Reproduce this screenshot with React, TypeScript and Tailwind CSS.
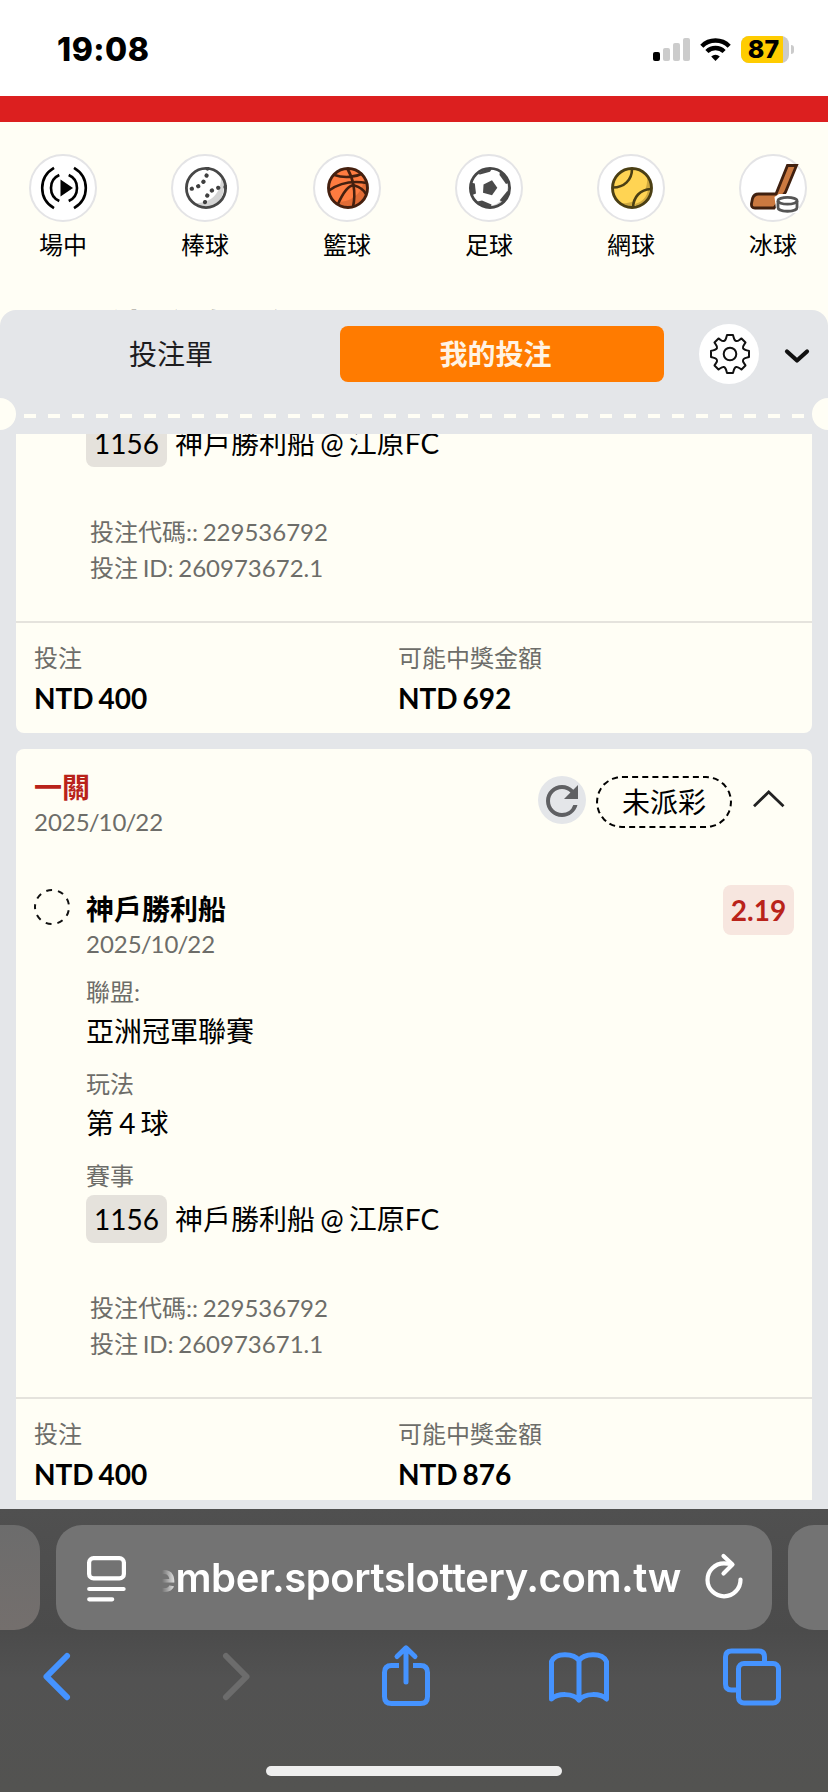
import type { ReactNode } from 'react'

const bets = [
  {
    id: '260973672.1',
    code: '229536792',
    matchNo: '1156',
    match: '神戶勝利船 @ 江原FC',
    stake: 'NTD 400',
    payout: 'NTD 692',
  },
  {
    id: '260973671.1',
    code: '229536792',
    matchNo: '1156',
    match: '神戶勝利船 @ 江原FC',
    stake: 'NTD 400',
    payout: 'NTD 876',
  },
]

type Bet = (typeof bets)[number]

function LiveIcon() {
  return (
    <svg width="48" height="48" viewBox="0 0 48 48" fill="none" stroke="#000" strokeWidth="2.6" className="relative left-px">
      <path d="M14 3.8C6 8.500 2.200 15.500 2.200 24S6 39.500 14 44.200" />
      <path d="M34 3.800C42 8.500 45.800 15.500 45.800 24S42 39.500 34 44.200" />
      <path d="M19.300 11C13.500 13.500 11 18 11 24S13.500 34.500 19.300 37" />
      <path d="M28.700 11C34.500 13.500 37 18 37 24S34.500 34.500 28.700 37" />
      <path d="M20.500 15.500v17L33 24z" fill="#000" stroke="none" />
    </svg>
  )
}

function BaseballIcon() {
  return (
    <svg width="42" height="42" viewBox="0 0 42 42" fill="none" className="relative left-px">
      <circle cx="21" cy="21" r="19.500" fill="#fff" />
      <path d="M36 8c1 18-10 29-27 28 8 6 18 5 24-1s8-17 3-27z" fill="#d4d4d4" />
      <path d="M22.500 1.500c0 12-7 20-21 21M40.500 20C26 20 19.500 28 19.500 40.500" stroke="#3f3f3f" strokeWidth="4.200" strokeLinecap="round" strokeDasharray="0.1 6.9" />
      <circle cx="21" cy="21" r="19.600" stroke="#474747" strokeWidth="2.800" />
    </svg>
  )
}

function BasketballIcon() {
  return (
    <svg width="42" height="42" viewBox="0 0 42 42" fill="none" className="relative left-px">
      <circle cx="21" cy="21" r="19.500" fill="#ff7c40" />
      <path d="M37 9c0 17-12 27-29 26 8 7 19 6 26-1s8-17 3-25z" fill="#e06c36" />
      <g stroke="#45200f" strokeWidth="2.600">
        <path d="M20.500 2c5 8 9 22 5.500 38" />
        <path d="M7.500 8C17 11.500 29 10 35.500 6.500" />
        <path d="M2 23.500C13 15.500 26 13.500 40 16" />
        <path d="M11 37C16 26 22 17.500 27.500 18.500C33 20 37 23.500 39 27" />
        <circle cx="21" cy="21" r="19.500" strokeWidth="2.900" />
      </g>
    </svg>
  )
}

function SoccerIcon() {
  return (
    <svg width="42" height="42" viewBox="0 0 42 42" fill="none" className="relative left-px">
      <circle cx="21" cy="21" r="19.500" fill="#fff" />
      <path d="M39 12c1 16-7 25-18 27 8 2 19-3 19-18z" fill="#d2d2d2" />
      <path d="M23 5q4 3 9 1l6 12-1 7-4 8-10 5-9-4-7-8-1-9 5-9z" fill="#fff" />
      <g fill="#4a4a4a">
        <path d="M14.500 17.500 23 13.300 28.300 20.800 23 28.300 14 25.800z" />
        <path d="M9 7Q15 1.500 23 1.800L21 4.800 11 7.500z" />
        <path d="M31 4q6 4 8.500 12l-2.500 1-6.500-9z" />
        <path d="M40 23q-.5 7-5.500 12.500l-3.800-2.200L37.500 25z" />
        <path d="M8.500 34.500 13 33.500l9.500 4-.5 2.500q-8 0-13.500-5.500z" />
        <path d="M2 15.500 5.800 16.500 7 26.500 3.500 28q-3-6-1.500-12.500z" />
      </g>
      <circle cx="21" cy="21" r="19.600" stroke="#474747" strokeWidth="2.800" />
    </svg>
  )
}

function TennisIcon() {
  return (
    <svg width="42" height="42" viewBox="0 0 42 42" fill="none" className="relative left-px">
      <circle cx="21" cy="21" r="19.500" fill="#ffd453" />
      <path d="M36 8c2 17-9 30-28 28 9 7 20 5 26-1s8-18 2-27z" fill="#cfa93f" />
      <path d="M22 40C22 29 29 23 40 21.500c0 10-8 18-18 18.500z" fill="#ffd453" />
      <path d="M37 22c-.5 8-6 13-13 15 0 3 7 3 11-2s5-9 2-13z" fill="#cfa93f" />
      <g stroke="#4b3f14" strokeWidth="2.600">
        <path d="M21 2C21 13 13 20.500 2 20.500" />
        <path d="M22 40.500C22.500 30 29 22.500 40 22" />
        <circle cx="21" cy="21" r="19.500" strokeWidth="2.900" />
      </g>
    </svg>
  )
}

function HockeyIcon() {
  return (
    <svg width="50" height="50" viewBox="0 0 50 50" fill="none" className="relative left-px">
      <path d="M38.500 2.500h9L36.500 29 25 45H6q-4 0-3.500-4.500l1-5Q5 31 9.500 31h17.500z" fill="#cb7940" stroke="#40200f" strokeWidth="2.800" />
      <path d="M25.500 34 30 31h20v19H27.500z" fill="#fff" />
      <ellipse cx="38.500" cy="37.800" rx="9.500" ry="3.400" fill="#fff" stroke="#555" strokeWidth="2.800" />
      <path d="M29 38v6.500c0 5 19 5 19 0V38" stroke="#555" strokeWidth="2.800" />
    </svg>
  )
}

const sports: { name: string; icon: ReactNode }[] = [
  { name: '場中', icon: <LiveIcon /> },
  { name: '棒球', icon: <BaseballIcon /> },
  { name: '籃球', icon: <BasketballIcon /> },
  { name: '足球', icon: <SoccerIcon /> },
  { name: '網球', icon: <TennisIcon /> },
  { name: '冰球', icon: <HockeyIcon /> },
]

function StatusBar() {
  return (
    <div className="flex h-24 shrink-0 items-start justify-between bg-white pl-[57px] pr-[34px] pt-[36px] font-['Inter','Liberation_Sans',sans-serif]">
      <span className="text-[32px] font-extrabold leading-[27px] tracking-[0.5px] text-black">19:08</span>
      <div className="flex items-center">
        <svg width="37" height="27" viewBox="0 0 37 27" className="mr-[10px]">
          <rect x="0" y="16" width="7" height="9" rx="2" fill="#000" />
          <rect x="10" y="12" width="7" height="13" rx="2" fill="#ccc" />
          <rect x="20" y="7" width="7" height="18" rx="2" fill="#ccc" />
          <rect x="30" y="2" width="7" height="23" rx="2" fill="#ccc" />
        </svg>
        <svg width="31" height="27" viewBox="0 0 31 27" className="mr-[10px]" fill="none" stroke="#000" strokeWidth="4.400">
          <path d="M1.800 10.200a19.300 19.300 0 0 1 27.400 0" />
          <path d="M6.900 15.500a12.200 12.200 0 0 1 17.200 0" />
          <path d="M15.500 25l4.300-4.400a6 6 0 0 0-8.600 0z" fill="#000" stroke="none" />
        </svg>
        <div className="flex h-[27px] w-12 overflow-hidden rounded-[8px] bg-[#cbcbcb]">
          <span className="w-[42px] bg-[#ffcc00] pl-[3px] text-center text-[25px] font-extrabold leading-[27px] text-black">87</span>
        </div>
        <div className="ml-[2px] h-[9px] w-[3px] rounded-r-full bg-[#cbcbcb]" />
      </div>
    </div>
  )
}

function SportsNav() {
  return (
    <div className="flex h-[186px] shrink-0 overflow-hidden pt-8">
      <div className="-ml-2 flex">
        {sports.map((sport) => (
          <div key={sport.name} className="flex w-[142px] shrink-0 flex-col items-center">
            <div className="flex size-[68px] items-center justify-center rounded-full border-2 border-[#e4e4e6] bg-white">
              {sport.icon}
            </div>
            <span className="mt-[5px] text-[24px] leading-9 text-black">{sport.name}</span>
          </div>
        ))}
      </div>
    </div>
  )
}

function SlipHeader() {
  return (
    <div className="flex h-[124px] shrink-0 flex-col rounded-t-[16px] bg-[#e4e6e9]">
      <div className="flex items-center pt-[14px]">
        <button className="h-14 w-[340px] pl-[2px] text-[28px] text-[#1c1c1e]">投注單</button>
        <button className="h-14 w-[324px] rounded-lg bg-[#ff7b00] pr-[13px] text-[28px] font-bold text-[#fff3e4]">
          我的投注
        </button>
        <button className="ml-[35px] flex size-[60px] items-center justify-center rounded-full bg-white pl-[1px]">
          <svg width="42" height="42" viewBox="-21 -21 42 42" fill="none" stroke="#111" strokeWidth="2" strokeLinejoin="round">
            <circle r="6.300" />
            <path d="M-3-19H3C4-16 4-13.500 6-13C8-12.300 9.500-14.500 11.500-15.500L15.500-11.500C14.500-9.500 12.300-8 13-6C13.500-4 16-4 19-3V3C16 4 13.500 4 13 6C12.300 8 14.500 9.500 15.500 11.500L11.500 15.500C9.500 14.500 8 12.300 6 13C4 13.500 4 16 3 19H-3C-4 16-4 13.500-6 13C-8 12.300-9.500 14.500-11.500 15.500L-15.500 11.500C-14.500 9.500-12.300 8-13 6C-13.500 4-16 4-19 3V-3C-16-4-13.500-4-13-6C-12.300-8-14.500-9.500-15.500-11.500L-11.500-15.500C-9.500-14.500-8-12.300-6-13C-4-13.500-4-16-3-19Z" />
          </svg>
        </button>
        <svg width="26" height="16" viewBox="0 0 26 16" className="ml-[25px] mt-[3px]" fill="none" stroke="#111" strokeWidth="4.200" strokeLinejoin="round" strokeLinecap="round">
          <path d="M3 3.500 13 12.500 23 3.500" />
        </svg>
      </div>
      {/* ticket perforation */}
      <div className="mt-[14px] flex h-8 items-center justify-between">
        <div className="h-8 w-4 rounded-r-full bg-[#fffef5]" />
        <div className="mt-1 h-1 w-[780px] bg-[repeating-linear-gradient(90deg,#fffef5_0_12px,transparent_12px_24px)]" />
        <div className="h-8 w-4 rounded-l-full bg-[#fffef5]" />
      </div>
    </div>
  )
}

function BetDate({ date }: { date: string }) {
  const [year, month, day] = date.split('/')
  return (
    <span className="mb-[2px] text-[24px] leading-[30px] text-[#6d6d69]">
      {year}
      <span className="-mx-px">/</span>
      {month}
      <span className="-mx-px">/</span>
      {day}
    </span>
  )
}

function BetHeader() {
  return (
    <div className="flex h-[117px] items-start justify-between pl-[18px] pr-[26px] pt-[18px]">
      <div className="flex flex-col">
        <span className="text-[28px] font-bold leading-10 text-[#b9231a]">一關</span>
        <BetDate date="2025/10/22" />
      </div>
      <div className="flex pt-[9px]">
        <button className="flex size-12 items-center justify-center rounded-full bg-[#e4e6e9]">
          <svg width="48" height="48" viewBox="0 0 24 24" fill="#5f6063" className="relative top-px">
            <path d="M17.650 6.350A7.958 7.958 0 0 0 12 4c-4.420 0-7.990 3.580-7.990 8s3.570 8 7.990 8c3.730 0 6.840-2.550 7.730-6h-2.080A5.990 5.990 0 0 1 12 18c-3.310 0-6-2.690-6-6s2.690-6 6-6c1.660 0 3.140.690 4.220 1.780L13 11h7V4z" />
          </svg>
        </button>
        <div className="ml-[10px] flex h-[52px] w-[136px] items-center justify-center rounded-full border-2 border-dashed border-black text-[28px] text-black">
          未派彩
        </div>
        <svg width="34" height="20" viewBox="0 0 34 20" className="ml-5 mt-[12px]" fill="none" stroke="#222" strokeWidth="2.800">
          <path d="M2 18.300 16.700 4 31.500 18.300" />
        </svg>
      </div>
    </div>
  )
}

function Selection() {
  return (
    <div className="flex items-start pl-[18px] pr-[18px]">
      <div className="mt-[23px] flex size-9 items-center">
        <svg width="36" height="36" viewBox="0 0 36 36" fill="none" stroke="#111" strokeWidth="2">
          <circle cx="18" cy="18" r="17" strokeDasharray="5.87 6" strokeDashoffset="3" transform="rotate(180 18 18)" />
        </svg>
      </div>
      <div className="ml-4 flex flex-1 flex-col pt-[23px]">
        <span className="text-[28px] font-bold leading-10 text-black">神戶勝利船</span>
        <BetDate date="2025/10/22" />
        <span className="mb-[2px] mt-[14px] text-[24px] leading-[34px] text-[#6d6d69]">聯盟:</span>
        <span className="text-[28px] leading-10 text-black">亞洲冠軍聯賽</span>
        <span className="mb-[2px] mt-4 text-[24px] leading-[34px] text-[#6d6d69]">玩法</span>
        <span className="text-[28px] leading-10 text-black [word-spacing:-2px]">第 4 球</span>
        <span className="mb-[2px] mt-4 text-[24px] leading-[34px] text-[#6d6d69]">賽事</span>
      </div>
      <span className="mt-[19px] h-[50px] w-[71px] rounded-lg bg-[#f7e6df] text-center text-[28px] font-bold leading-[50px] text-[#b9231a]">
        2.19
      </span>
    </div>
  )
}

function BetFooter({ bet }: { bet: Bet }) {
  return (
    <div>
      <div className="flex items-center pl-[70px]">
        <span className="flex h-12 w-[81px] items-center justify-center rounded-lg bg-[#e5e2dc] text-[28px] text-black">
          {bet.matchNo}
        </span>
        <span className="ml-[8px] text-[28px] text-black [word-spacing:-2px]">{bet.match}</span>
      </div>
      <div className="mt-[47px] flex flex-col pl-[74px] text-[24px] leading-9 text-[#6d6d69] [word-spacing:-1.5px]">
        <span>投注代碼:: {bet.code}</span>
        <span>投注 ID: {bet.id}</span>
      </div>
      <div className="mt-[35px] flex h-[112px] border-t-2 border-[#e5e3dd] pl-[18px] pt-[17px] [word-spacing:-2px]">
        <div className="flex w-[364px] flex-col">
          <span className="text-[24px] leading-9 text-[#6d6d69]">投注</span>
          <span className="mt-[2px] text-[28px] font-bold leading-10 text-black">{bet.stake}</span>
        </div>
        <div className="flex flex-col">
          <span className="text-[24px] leading-9 text-[#6d6d69]">可能中獎金額</span>
          <span className="mt-[2px] text-[28px] font-bold leading-10 text-black">{bet.payout}</span>
        </div>
      </div>
    </div>
  )
}

function BrowserBar() {
  return (
    <div className="flex h-[283px] shrink-0 flex-col bg-[linear-gradient(180deg,#505050_0%,#4b4b4b_43%,#525252_60%,#535351_100%)] font-['Inter','Liberation_Sans',sans-serif]">
      <div className="flex justify-between pt-4">
        <div className="h-[105px] w-10 rounded-r-[26px] bg-[linear-gradient(180deg,#6c6c6c,#746f6d)]" />
        <div className="flex h-[105px] w-[716px] items-center rounded-[26px] bg-[#737373] pl-[31px]">
          <svg width="39" height="46" viewBox="0 0 39 46" className="mt-[3px]" fill="none" stroke="#fff" strokeWidth="4.200" strokeLinecap="round">
            <rect x="2.100" y="2.100" width="34.800" height="20.300" rx="4.500" />
            <path d="M2.200 33h34.400M2.200 43.300h23" />
          </svg>
          <div className="ml-[36px] flex w-[519px] justify-end overflow-hidden [mask-image:linear-gradient(90deg,transparent_0,#000_16px)]">
            <span className="text-[40px] font-semibold leading-[52px] tracking-[-0.400px] text-white">member.sportslottery.com.tw</span>
          </div>
          <svg width="40" height="48" viewBox="0 0 40 48" className="mb-[4px] ml-[23px]" fill="none" stroke="#fff" strokeWidth="4.200" strokeLinecap="round" strokeLinejoin="round">
            <path d="M36.500 27.500A16.500 16.500 0 1 1 20 11.300q4 0 7.500 1" />
            <path d="M19.500 4 28.500 12.500 19.500 21.500" />
          </svg>
        </div>
        <div className="h-[105px] w-10 rounded-l-[26px] bg-[#737373]" />
      </div>
      <div className="flex h-[136px] items-start pt-[13px] text-[#4593ff]">
        <svg width="32" height="52" viewBox="0 0 32 52" className="ml-[41px] mt-[8px]" fill="none" stroke="currentColor" strokeWidth="6" strokeLinecap="round" strokeLinejoin="round">
          <path d="M26 5 5.500 25.600 26 46.200" />
        </svg>
        <svg width="32" height="52" viewBox="0 0 32 52" className="ml-[148px] mt-[8px]" fill="none" stroke="#6c6c6c" strokeWidth="6" strokeLinecap="round" strokeLinejoin="round">
          <path d="M5 5 25.500 25.600 5 46.200" />
        </svg>
        <svg width="48" height="64" viewBox="0 0 48 64" className="ml-[129px]" fill="none" stroke="currentColor" strokeWidth="5" strokeLinecap="round" strokeLinejoin="round">
          <path d="M17 22.500H9.500q-7 0-7 7v24q0 7 7 7h29q7 0 7-7v-24q0-7-7-7H31" strokeLinecap="butt" />
          <path d="M24 39V5M15 13.500 24 4.800l9 8.700" />
        </svg>
        <svg width="62" height="52" viewBox="0 0 62 52" className="ml-[118px] mt-[9px]" fill="none" stroke="currentColor" strokeWidth="5" strokeLinecap="round" strokeLinejoin="round">
          <path d="M31 8.500C26 1.500 8 0 3.500 9.500V47C10 41 25 41 31 48C37 41 52 41 58.500 47V9.500C54 0 36 1.500 31 8.500ZM31 8.500V48" />
        </svg>
        <svg width="58" height="58" viewBox="0 0 58 58" className="ml-[113px] mt-[5px]" fill="none" stroke="currentColor" strokeWidth="5">
          <rect x="15.500" y="15.500" width="40" height="39.500" rx="5.500" />
          <path d="M41.500 15V9q0-6-6-6H8.500q-6 0-6 6v27q0 6 6 6H15" />
        </svg>
      </div>
      <div className="mx-auto h-[10px] w-[296px] rounded-full bg-[#eee]" />
    </div>
  )
}

export default function App() {
  return (
    <div className="flex h-[1792px] w-[828px] flex-col overflow-hidden bg-[#fffef5] font-['Lato','Noto_Sans_CJK_TC',sans-serif]">
      <StatusBar />
      <div className="h-[26px] shrink-0 bg-[#dc1f1f]" />
      <SportsNav />
      {/* page title scrolled under the slip */}
      <div className="h-[2px] shrink-0 overflow-hidden pl-[107px] text-[40px] font-bold leading-[40px] text-black">
        <div className="mt-px">神戶勝利船</div>
      </div>
      <SlipHeader />
      <div className="flex h-[1075px] shrink-0 flex-col bg-[#e4e6e9] px-4 pb-[9px]">
        <div className="flex flex-1 flex-col gap-4 overflow-hidden">
          <div className="-mt-[15px] h-[314px] shrink-0 rounded-lg bg-[#fffef5]">
            <BetFooter bet={bets[0]} />
          </div>
          <div className="shrink-0 rounded-lg bg-[#fffef5]">
            <BetHeader />
            <Selection />
            <BetFooter bet={bets[1]} />
          </div>
        </div>
      </div>
      <BrowserBar />
    </div>
  )
}
